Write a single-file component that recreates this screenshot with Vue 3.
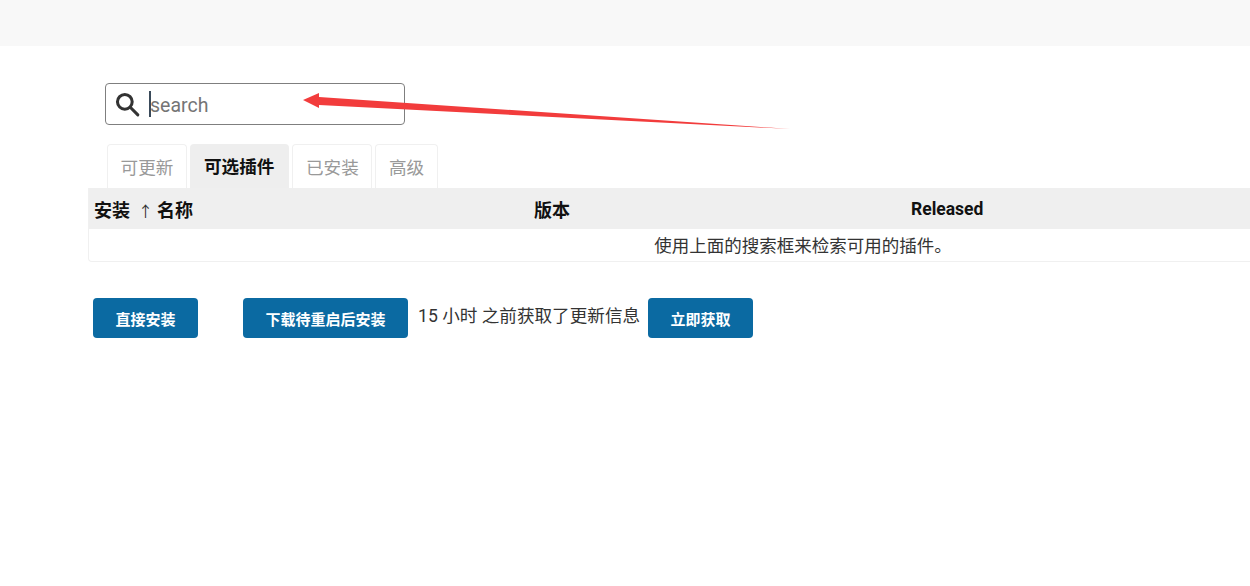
<script setup>
const tabs = [
  { label: '可更新' },
  { label: '可选插件', active: true },
  { label: '已安装' },
  { label: '高级' },
];
</script>

<template>
  <div class="page">
    <div class="topbar" />

    <main class="content">
      <div class="search">
        <svg class="search-icon" viewBox="0 0 24 24" width="26" height="26" fill="none" stroke="#333" stroke-width="2.8">
          <circle cx="10" cy="10" r="6.800" />
          <path d="M15 15l7 7" stroke-linecap="round" />
        </svg>
        <span class="caret" />
        <span class="placeholder">search</span>
      </div>

      <ul class="tabs">
        <li v-for="tab in tabs" :key="tab.label" class="tab" :class="{ active: tab.active }">{{ tab.label }}</li>
      </ul>

      <div class="table">
        <div class="thead">
          <div class="th th-install">安装<span class="sort">↑</span></div>
          <div class="th th-name">名称</div>
          <div class="th th-version">版本</div>
          <div class="th th-released">Released</div>
        </div>
        <div class="empty">使用上面的搜索框来检索可用的插件。</div>
      </div>

      <div class="actions">
        <button class="btn first">直接安装</button>
        <button class="btn">下载待重启后安装</button>
        <span class="info">15 小时 之前获取了更新信息</span>
        <button class="btn">立即获取</button>
      </div>
    </main>

    <svg class="arrow" width="500" height="40" viewBox="0 0 500 40">
      <path d="M2 9L18 2L18 6L489 38L18 14L18 17Z" fill="#f23c3c" />
    </svg>
  </div>
</template>

<style>
html, body {
  margin: 0;
  background: #fff;
}
</style>

<style scoped>
.page {
  position: relative;
  width: 1250px;
  height: 586px;
  overflow: hidden;
  background: #fff;
  font-family: Roboto, "Noto Sans CJK SC", sans-serif;
  color: #333;
}

.topbar {
  height: 46px;
  background: #f8f8f8;
}

.content {
  padding: 37px 0 0 88px;
}

.search {
  display: flex;
  align-items: center;
  box-sizing: border-box;
  width: 300px;
  height: 42px;
  margin-left: 17px;
  padding-left: 8px;
  border: 1px solid #7f7f7f;
  border-radius: 4px;
}

.search-icon {
  flex: none;
}

.caret {
  width: 2px;
  height: 26px;
  margin-left: 9px;
  background: #3a4a5a;
}

.placeholder {
  margin: 2px 0 0 -1px;
  font-size: 19.500px;
  color: #757575;
}

.tabs {
  display: flex;
  gap: 3px;
  margin: 19px 0 0 19px;
  padding: 0;
  list-style: none;
}

.tab {
  box-sizing: border-box;
  height: 44px;
  padding: 0 12.600px;
  border: 1px solid #f0f0f0;
  border-bottom: 0;
  border-radius: 4px 4px 0 0;
  font-size: 17.600px;
  line-height: 46px;
  color: #999;
}

.tab.active {
  padding: 0 15px 0 14px;
  border: 0;
  background: #eee;
  font-weight: 700;
  color: #111;
}

.table {
  width: 1428px;
  border: 1px solid #f0f0f0;
  border-top: 0;
  border-radius: 0 0 4px 4px;
}

.thead {
  display: flex;
  align-items: center;
  height: 41px;
  padding-left: 5px;
  background: #efefef;
}

.th {
  font-size: 18px;
  font-weight: 700;
  color: #111;
}

.th-install {
  width: 63px;
}

.sort {
  margin-left: 8px;
  font-size: 15px;
  font-weight: 400;
  color: #333;
}

.th-name {
  width: 377px;
}

.th-version {
  width: 377px;
}

.th-released {
  padding-top: 1px;
  font-size: 17.500px;
}

.empty {
  height: 32px;
  font-size: 17.500px;
  line-height: 34px;
  text-align: center;
}

.actions {
  display: flex;
  align-items: center;
  margin: 36px 0 0 5px;
}

.btn {
  height: 40px;
  padding: 0 22.500px;
  border: 0;
  border-radius: 4px;
  background: #0b6aa2;
  font-family: inherit;
  font-size: 15px;
  font-weight: 700;
  color: #fff;
}

.btn.first {
  margin-right: 45px;
}

.info {
  margin: -8px 8px 0 10px;
  font-size: 17.600px;
  white-space: nowrap;
}

.arrow {
  position: absolute;
  left: 301px;
  top: 91px;
}
</style>
